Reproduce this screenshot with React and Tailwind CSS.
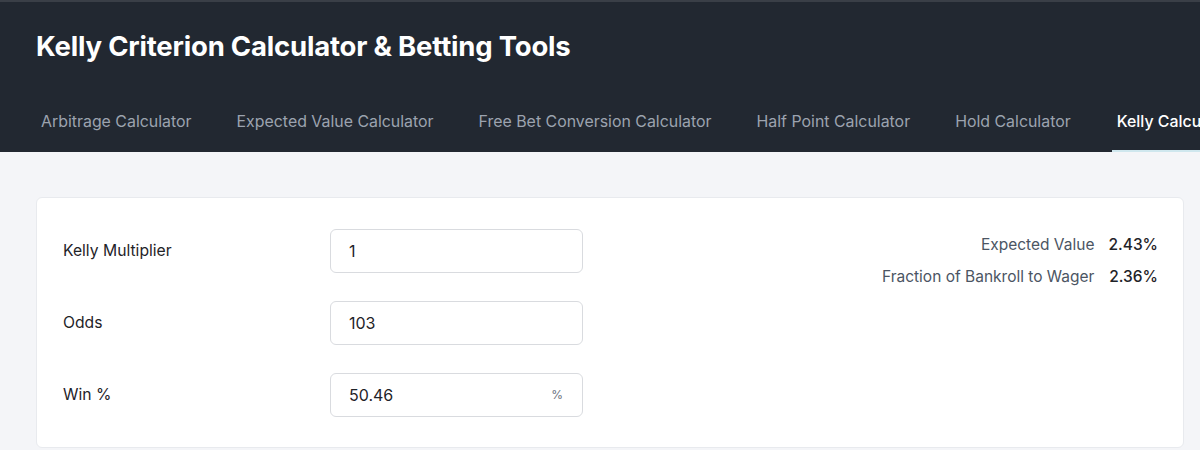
const tabs = [
  'Arbitrage Calculator',
  'Expected Value Calculator',
  'Free Bet Conversion Calculator',
  'Half Point Calculator',
  'Hold Calculator',
  'Kelly Calculator',
];

const fields = [
  { label: 'Kelly Multiplier', value: '1' },
  { label: 'Odds', value: '103' },
  { label: 'Win %', value: '50.46', suffix: '%' },
];

const results = [
  { label: 'Expected Value', value: '2.43%' },
  { label: 'Fraction of Bankroll to Wager', value: '2.36%' },
];

export default function App() {
  return (
    <div className="min-h-[450px] bg-[#f4f5f8] font-['Inter',sans-serif] overflow-hidden">
      <header className="bg-[#222831] border-t-2 border-[#3a3f47]">
        <h1 className="px-9 pt-[28px] text-[27.5px] leading-8 font-bold text-white tracking-[-0.2px]">
          Kelly Criterion Calculator &amp; Betting Tools
        </h1>
        <nav className="mt-[50px] flex gap-[35px] px-[36px] whitespace-nowrap">
          {tabs.map((t, i) => {
            const active = i === tabs.length - 1;
            return (
              <div
                key={t}
                className={`px-[5px] pb-[18px] text-[15.9px] leading-5 border-b-2 ${
                  active ? 'ml-[1px] text-white font-medium border-[#cfe7ee]' : 'text-[#9ca3af] border-transparent'
                }`}
              >
                {t}
              </div>
            );
          })}
        </nav>
      </header>

      <main className="pl-9 pr-4 pt-[45px]">
        <div className="bg-white border border-[#e8eaee] rounded-md pl-[26px] pr-[25px] pt-[31px] pb-[30px] flex justify-between">
          <div className="flex flex-col gap-7">
            {fields.map((f) => (
              <div key={f.label} className="flex items-center">
                <label className="w-[267px] text-[15.7px] text-[#1f2328]">{f.label}</label>
                <div className="relative w-[253px] h-[44px] border border-[#d9dbdf] rounded-md flex items-center px-[18px]">
                  <span className="text-[16px] text-[#1f2328]">{f.value}</span>
                  {f.suffix && (
                    <span className="ml-auto mr-[1px] text-[12px] text-[#6b7280]">{f.suffix}</span>
                  )}
                </div>
              </div>
            ))}
          </div>
          <div className="grid grid-cols-[auto_auto] gap-x-[14px] gap-y-[12px] content-start pt-[6px] text-[15.5px] leading-5">
            {results.map((r) => (
              <div key={r.label} className="contents">
                <span className="text-right text-[#4b5563]">{r.label}</span>
                <span className="text-right font-medium text-[#1f2328]">{r.value}</span>
              </div>
            ))}
          </div>
        </div>
      </main>
    </div>
  );
}
